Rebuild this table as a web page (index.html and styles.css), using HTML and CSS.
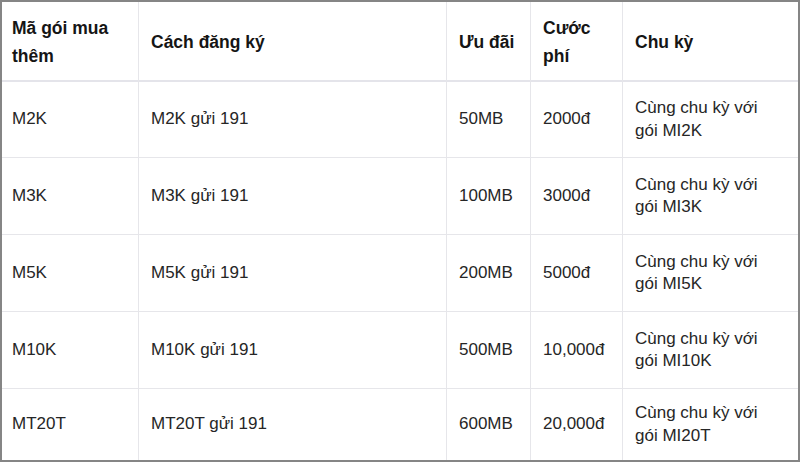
FILE: index.html
```html
<!DOCTYPE html>
<html lang="vi">
<head>
<meta charset="utf-8">
<title>Gói mua thêm</title>
<link rel="stylesheet" href="styles.css">
</head>
<body>
<div class="frame">
  <table class="plans">
    <colgroup>
      <col class="c1"><col class="c2"><col class="c3"><col class="c4"><col class="c5">
    </colgroup>
    <thead>
      <tr class="head">
        <th class="first">Mã gói mua thêm</th>
        <th>Cách đăng ký</th>
        <th>Ưu đãi</th>
        <th>Cước phí</th>
        <th class="last">Chu kỳ</th>
      </tr>
    </thead>
    <tbody>
      <tr class="r1">
        <td class="first">M2K</td>
        <td>M2K gửi 191</td>
        <td>50MB</td>
        <td>2000đ</td>
        <td class="last">Cùng chu kỳ với gói MI2K</td>
      </tr>
      <tr class="r2">
        <td class="first">M3K</td>
        <td>M3K gửi 191</td>
        <td>100MB</td>
        <td>3000đ</td>
        <td class="last">Cùng chu kỳ với gói MI3K</td>
      </tr>
      <tr class="r2">
        <td class="first">M5K</td>
        <td>M5K gửi 191</td>
        <td>200MB</td>
        <td>5000đ</td>
        <td class="last">Cùng chu kỳ với gói MI5K</td>
      </tr>
      <tr class="r2">
        <td class="first">M10K</td>
        <td>M10K gửi 191</td>
        <td>500MB</td>
        <td>10,000đ</td>
        <td class="last">Cùng chu kỳ với gói MI10K</td>
      </tr>
      <tr class="r5">
        <td class="first">MT20T</td>
        <td>MT20T gửi 191</td>
        <td>600MB</td>
        <td>20,000đ</td>
        <td class="last">Cùng chu kỳ với gói MI20T</td>
      </tr>
    </tbody>
  </table>
</div>
</body>
</html>
```
FILE: styles.css
```css
html, body {
  margin: 0;
  padding: 0;
  background: #ffffff;
}

.frame {
  box-sizing: border-box;
  width: 800px;
  height: 462px;
  border: 2px solid #858585;
  background: #ffffff;
  overflow: hidden;
}

.plans {
  width: 796px;
  border-collapse: separate;
  border-spacing: 0;
  table-layout: fixed;
  font-family: "Liberation Sans", Arial, sans-serif;
  color: #262626;
}

.c1 { width: 137px; }
.c2 { width: 308px; }
.c3 { width: 84px; }
.c4 { width: 92px; }
.c5 { width: 175px; }

.plans th,
.plans td {
  box-sizing: border-box;
  text-align: left;
  vertical-align: middle;
  padding: 0 12px;
  border-right: 1px solid #e6e6ea;
  border-bottom: 1px solid #e6e6ea;
}

.plans th {
  font-size: 17.5px;
  font-weight: bold;
  line-height: 28px;
  color: #151515;
  height: 80px;
  padding-top: 2px;
  border-bottom: 2px solid #e4e4ea;
}

.plans td {
  font-size: 17px;
  line-height: 22.5px;
}

.plans .first { padding-left: 10px; }
.plans .last { border-right: none; padding-right: 22px; }

.r1 td { height: 76px; }
.r2 td { height: 77px; }
.r5 td { height: 71px; border-bottom: none; }
```
